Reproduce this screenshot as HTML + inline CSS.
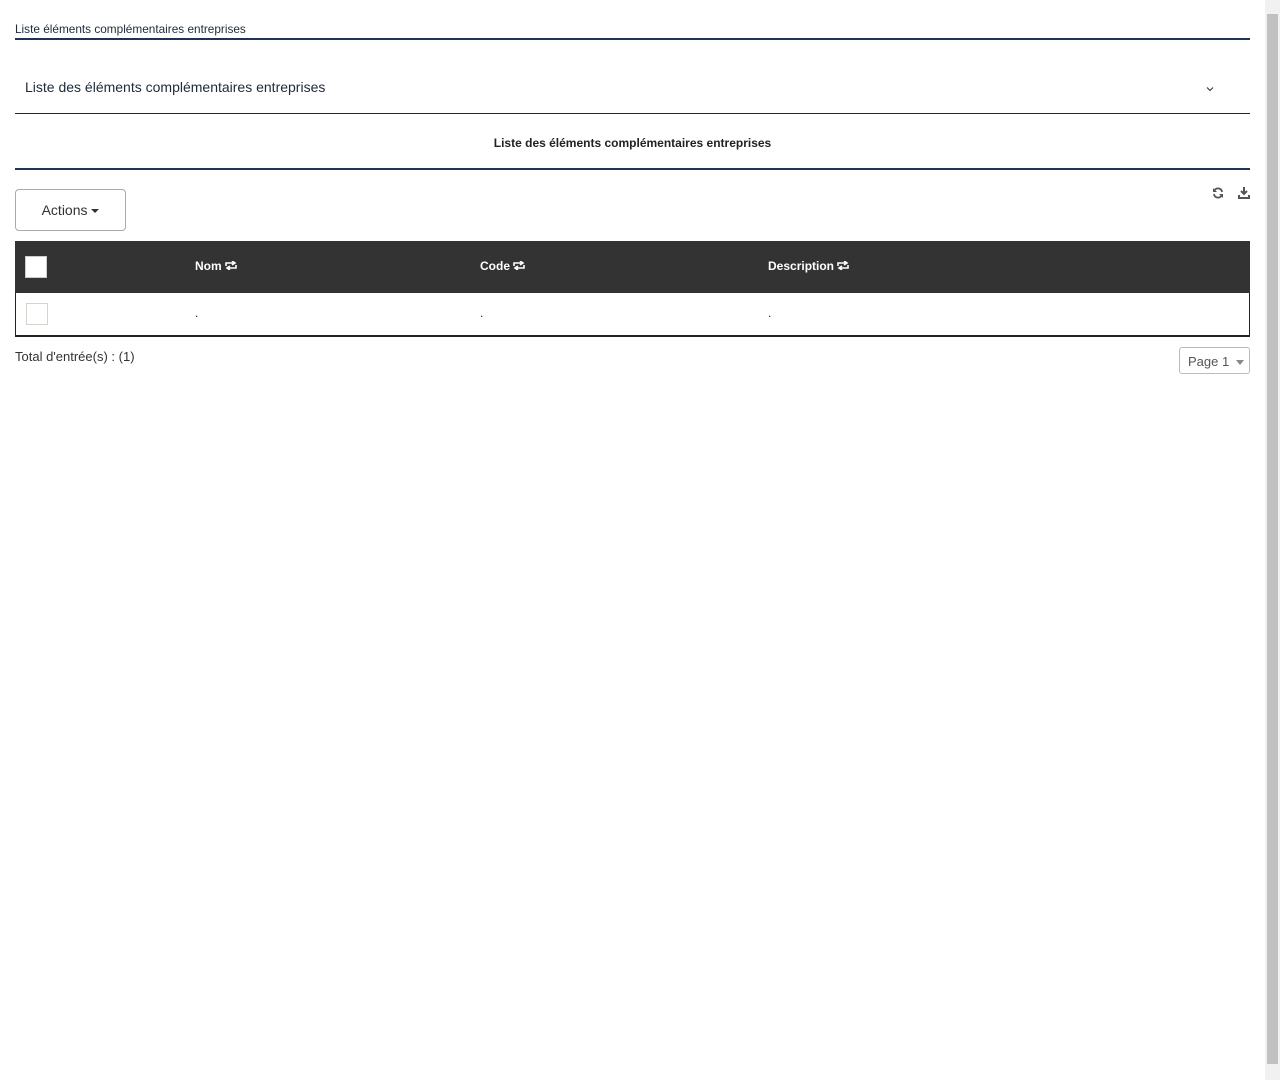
<!DOCTYPE html>
<html><head><meta charset="utf-8"><style>
body{margin:0;width:1280px;height:1080px;overflow:hidden;font-family:"Liberation Sans",sans-serif;background:#fff;color:#222;position:relative}
.a{position:absolute}
</style></head><body>
<div class="a" style="left:15px;top:22px;font-size:11.8px;color:#1d2a3a">Liste éléments complémentaires entreprises</div>
<div class="a" style="left:15px;top:38px;width:1235px;height:2px;background:#1d3452"></div>
<div class="a" style="left:25px;top:79px;font-size:14px;color:#1d2a3a">Liste des éléments complémentaires entreprises</div>
<svg class="a" style="left:1205px;top:85px" width="10" height="8" viewBox="0 0 10 8"><path d="M2 2.5 5 5.5 8 2.5" stroke="#333" stroke-width="1.1" fill="none"/></svg>
<div class="a" style="left:15px;top:113px;width:1235px;height:1px;background:#1d2a3a"></div>
<div class="a" style="left:15px;top:136px;width:1235px;text-align:center;font-size:12px;font-weight:bold;color:#222">Liste des éléments complémentaires entreprises</div>
<div class="a" style="left:15px;top:168px;width:1235px;height:2px;background:#1d3452"></div>
<div class="a" style="left:15px;top:189px;width:109px;height:40px;border:1px solid #aaa;border-radius:4px;font-size:14px;line-height:40px;text-align:center;color:#333">Actions <span style="display:inline-block;border-left:4px solid transparent;border-right:4px solid transparent;border-top:4px solid #333;vertical-align:middle"></span></div>
<svg class="a" style="left:1212px;top:187px" width="12" height="12" viewBox="0 0 12 12"><path d="M10 5A4 4 0 0 0 2.5 3.5M2 7a4 4 0 0 0 7.5 1.5" stroke="#555" stroke-width="1.8" fill="none"/><path d="M1 1v4h4zM11 11V7H7z" fill="#555"/></svg>
<svg class="a" style="left:1238px;top:187px" width="12" height="12" viewBox="0 0 12 12"><path d="M6 0v6M3 4l3 3 3-3" stroke="#555" stroke-width="2" fill="none"/><path d="M0 8h2v2h8V8h2v4H0z" fill="#555"/></svg>
<div class="a" style="left:15px;top:241px;width:1235px;height:52px;background:#333"></div>
<div class="a" style="left:25px;top:256px;width:20px;height:20px;background:#fff;border:1px solid #ccc"></div>
<div class="a" style="left:195px;top:259px;font-size:12px;font-weight:bold;color:#fff">Nom <svg width="12" height="9" viewBox="0 0 12 9"><path d="M1 5V2h8M7 0l3 2-3 2M11 4v3H3M5 9 2 7l3-2" stroke="#fff" stroke-width="1.6" fill="none"/></svg></div>
<div class="a" style="left:480px;top:259px;font-size:12px;font-weight:bold;color:#fff">Code <svg width="12" height="9" viewBox="0 0 12 9"><path d="M1 5V2h8M7 0l3 2-3 2M11 4v3H3M5 9 2 7l3-2" stroke="#fff" stroke-width="1.6" fill="none"/></svg></div>
<div class="a" style="left:768px;top:259px;font-size:12px;font-weight:bold;color:#fff">Description <svg width="12" height="9" viewBox="0 0 12 9"><path d="M1 5V2h8M7 0l3 2-3 2M11 4v3H3M5 9 2 7l3-2" stroke="#fff" stroke-width="1.6" fill="none"/></svg></div>
<div class="a" style="left:15px;top:293px;width:1233px;height:42px;border:1px solid #222;border-top:none;border-bottom-width:2px"></div>
<div class="a" style="left:26px;top:303px;width:20px;height:20px;border:1px solid #d8d2cc"></div>
<div class="a" style="left:195px;top:306px;font-size:12px">.</div>
<div class="a" style="left:480px;top:306px;font-size:12px">.</div>
<div class="a" style="left:768px;top:306px;font-size:12px">.</div>
<div class="a" style="left:15px;top:349px;font-size:13px;color:#333">Total d'entrée(s) : (1)</div>
<div class="a" style="left:1179px;top:347px;width:71px;height:27px;border:1px solid #bbb;border-radius:3px;font-size:13px;line-height:27px;color:#555;padding-left:8px;box-sizing:border-box">Page 1 <span style="display:inline-block;border-left:4px solid transparent;border-right:4px solid transparent;border-top:5px solid #888;vertical-align:middle;margin-left:3px"></span></div>
<div class="a" style="left:1265px;top:0;width:15px;height:1080px;background:#f1f1f1"></div>
<div class="a" style="left:1267px;top:14px;width:11px;height:1050px;background:#c1c1c1"></div>
</body></html>
